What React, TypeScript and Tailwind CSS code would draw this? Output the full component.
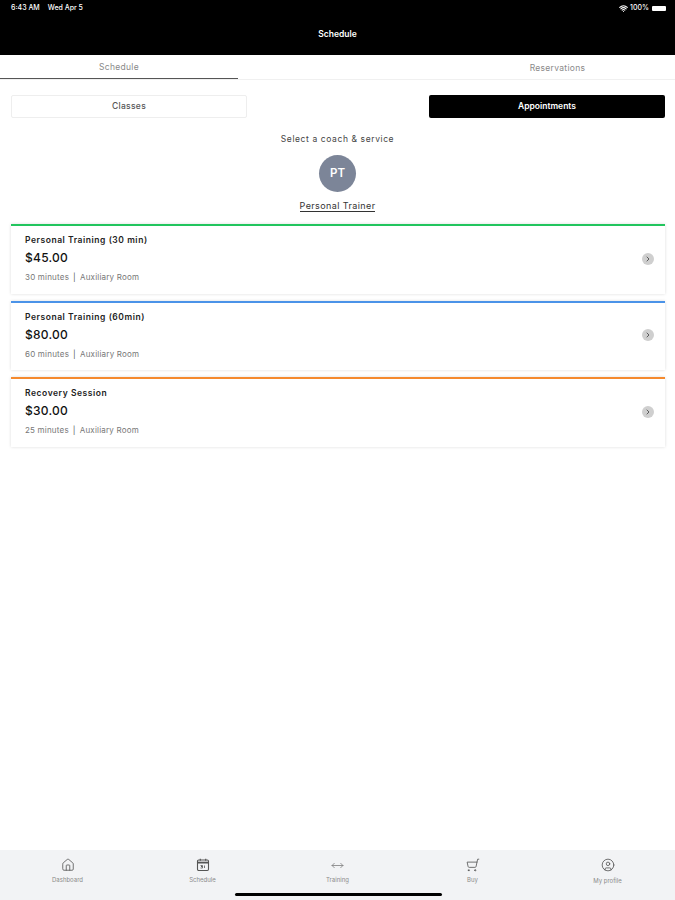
import { House, MoveHorizontal, ShoppingCart, CircleUser, Wifi, ChevronRight } from "lucide-react";

const services = [
  { name: "Personal Training (30 min)", price: "$45.00", meta: "30 minutes", border: "border-t-[#22c55e]" },
  { name: "Personal Training (60min)", price: "$80.00", meta: "60 minutes", border: "border-t-[#4b93e8]" },
  { name: "Recovery Session", price: "$30.00", meta: "25 minutes", border: "border-t-[#f58a2e]" },
];

function ScheduleIcon() {
  return (
    <svg width="14" height="14" viewBox="0 0 14 14" fill="none" stroke="currentColor" strokeWidth="1.1">
      <rect x="1.5" y="2" width="11" height="10.5" rx="1.2" />
      <path d="M1.5 4.6h11" strokeWidth="1.8" />
      <path d="M4.3 0.8v2M9.7 0.8v2" />
      <path d="M4.5 7.5h2v1h-1.5h1.5v1.5h-2M8.5 7.5v2.5" strokeWidth="0.8" />
    </svg>
  );
}

const nav = [
  { label: "Dashboard", icon: <House size={14} strokeWidth={1.4} />, labelClass: "mt-[4px]" },
  { label: "Schedule", icon: <ScheduleIcon />, labelClass: "mt-[4px]" },
  { label: "Training", icon: <MoveHorizontal size={13} strokeWidth={1.4} className="my-[0.5px] text-[#777]" />, labelClass: "mt-[4px]" },
  { label: "Buy", icon: <ShoppingCart size={14} strokeWidth={1.4} className="-scale-x-100" />, labelClass: "mt-[4px]" },
  { label: "My profile", icon: <CircleUser size={14} strokeWidth={1.4} />, labelClass: "mt-[5px]" },
];

export default function App() {
  return (
    <div className="relative flex h-[900px] w-[675px] flex-col overflow-hidden bg-white font-['Inter',sans-serif]">
      <header className="h-[55px] shrink-0 bg-black text-white">
        <div className="flex h-[16px] items-center justify-between pl-[11px] pr-[9px] text-[7px] font-medium">
          <div className="flex gap-[8px]">
            <span>6:43 AM</span>
            <span>Wed Apr 5</span>
          </div>
          <div className="flex items-center gap-[2px]">
            <Wifi size={9} strokeWidth={3} />
            <span>100%</span>
            <div className="ml-[1px] h-[5px] w-[14px] rounded-[1px] bg-white" />
          </div>
        </div>
        <div className="mt-[10px] text-center text-[8.5px] font-semibold leading-[16px]">Schedule</div>
      </header>

      <div className="flex h-[25px] shrink-0 border-b border-b-[#f0f0f0] text-[8.5px] tracking-[0.3px] text-[#8a8a8a]">
        <div className="flex w-[238px] items-center justify-center border-b-[1.5px] border-b-[#555] pt-[2px]">Schedule</div>
        <div className="flex flex-1 items-center justify-center pl-[202px] pt-[2px]">Reservations</div>
      </div>

      <div className="mt-[15px] flex justify-between pl-[11px] pr-[10px]">
        <button className="h-[23px] w-[236px] rounded-[2px] border border-[#eeeeee] bg-white text-[8.5px] font-medium tracking-[0.3px] text-[#555]">
          Classes
        </button>
        <button className="h-[23px] w-[236px] rounded-[2px] bg-black text-[8.5px] font-semibold text-white">
          Appointments
        </button>
      </div>

      <div className="mt-[15px] text-center text-[8.5px] leading-[12px] tracking-[0.6px] text-[#444]">
        Select a coach &amp; service
      </div>

      <div className="mt-[10px] flex flex-col items-center">
        <div className="flex h-[37px] w-[37px] items-center justify-center rounded-full bg-[#7c8598] text-[11.5px] font-semibold text-white">
          PT
        </div>
        <div className="mt-[8px] border-b border-b-[#333] text-[9px] leading-[11px] tracking-[0.4px] text-[#333]">
          Personal Trainer
        </div>
      </div>

      <div className="mt-[12px] flex flex-col gap-[7px] pl-[11px] pr-[10px]">
        {services.map((s) => (
          <div
            key={s.name}
            className={`flex h-[69.5px] items-center justify-between border-t-[2px] bg-white pb-[2px] pl-[14px] pr-[11px] shadow-[0_0_3px_rgba(0,0,0,0.14)] ${s.border}`}
          >
            <div>
              <div className="text-[8.5px] font-semibold leading-[12px] tracking-[0.55px] text-[#222]">{s.name}</div>
              <div className="mt-[4px] text-[12px] font-medium leading-[16px] tracking-[0.25px] text-[#111]">{s.price}</div>
              <div className="mt-[5px] flex items-center text-[8px] leading-[12px] tracking-[0.2px] text-[#777]">
                <span>{s.meta}</span>
                <span className="mx-[4px] text-[#555]">|</span>
                <span>Auxiliary Room</span>
              </div>
            </div>
            <div className="flex h-[12px] w-[12px] items-center justify-center rounded-full bg-[#cfcfcf] text-[#444]">
              <ChevronRight size={8} strokeWidth={2.5} />
            </div>
          </div>
        ))}
      </div>

      <nav className="mt-auto grid h-[50px] shrink-0 grid-cols-5 bg-[#f2f3f5]">
        {nav.map(({ label, icon, labelClass }) => (
          <div key={label} className="flex flex-col items-center pt-[8px] text-[#555]">
            {icon}
            <span className={`${labelClass} text-[6px] leading-[7px] text-[#8a8a8a]`}>{label}</span>
          </div>
        ))}
      </nav>
      <div className="absolute bottom-[4px] left-[235px] h-[3px] w-[207px] rounded-full bg-black" />
    </div>
  );
}
